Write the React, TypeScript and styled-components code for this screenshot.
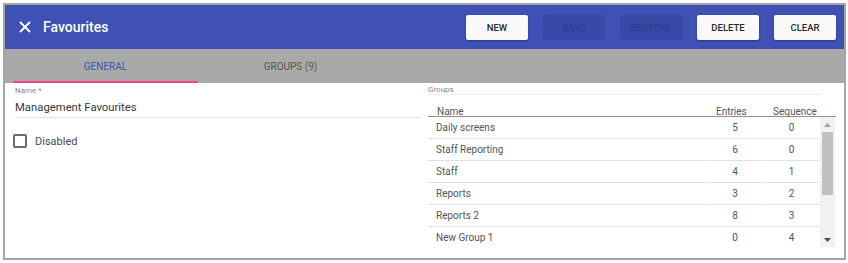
import React from "react";
import styled, { createGlobalStyle } from "styled-components";

const GlobalStyle = createGlobalStyle`
  html, body { margin: 0; padding: 0; background: #ffffff; }
  body { font-family: Roboto, "Liberation Sans", Arial, sans-serif; }
  * { box-sizing: border-box; }
`;

const Frame = styled.div`
  margin: 3px 0 0 3px;
  width: 843px;
  height: 257px;
  border: 2px solid #a4a4a4;
  display: flex;
  flex-direction: column;
  overflow: hidden;
`;

const Header = styled.div`
  height: 44px;
  flex: none;
  background: #3f51b5;
  display: flex;
  align-items: center;
  padding: 0 8px 0 14px;
`;

const CloseIcon = styled.svg`
  width: 12px;
  height: 12px;
  flex: none;
`;

const Title = styled.div`
  color: #ffffff;
  font-size: 14px;
  font-weight: 500;
  margin-left: 12px;
  flex: 1;
`;

const ButtonRow = styled.div`
  display: flex;
  gap: 15px;
`;

const ActionButton = styled.button<{ $disabled?: boolean }>`
  width: 62px;
  height: 25px;
  border: none;
  border-radius: 2px;
  font-family: Roboto, "Liberation Sans", Arial, sans-serif;
  font-size: 9.5px;
  font-weight: 500;
  text-transform: uppercase;
  padding: 0;
  background: ${(p) => (p.$disabled ? "#3848a6" : "#fafafa")};
  color: ${(p) => (p.$disabled ? "#2f3d8e" : "#2a2a2a")};
  box-shadow: ${(p) =>
    p.$disabled ? "none" : "0 1px 2px rgba(0,0,0,0.35)"};
`;

const TabBar = styled.div`
  height: 34px;
  flex: none;
  background: #a9a9a9;
  display: flex;
  padding-left: 8px;
`;

const Tab = styled.div<{ $active?: boolean }>`
  width: 185px;
  display: flex;
  align-items: center;
  justify-content: center;
  font-size: 10px;
  text-transform: uppercase;
  color: ${(p) => (p.$active ? "#3f51b5" : "#555555")};
  border-bottom: 2px solid ${(p) => (p.$active ? "#ff4081" : "transparent")};
  padding-top: 2px;
`;

const Content = styled.div`
  flex: 1;
  display: flex;
  gap: 8px;
  padding: 0 8px 0 10px;
  min-height: 0;
`;

const LeftColumn = styled.div`
  width: 405px;
  display: flex;
  flex-direction: column;
`;

const FieldLabel = styled.div`
  font-size: 8px;
  color: #8a8a8a;
  margin-top: 3px;
  height: 10px;
  line-height: 10px;
`;

const FieldValue = styled.div`
  font-size: 11.3px;
  color: #383838;
  height: 22px;
  padding-top: 2px;
  line-height: 19px;
  border-bottom: 1px solid #e2e2e2;
`;

const CheckRow = styled.label`
  display: flex;
  align-items: center;
  margin-top: 16px;
  margin-left: -2px;
  gap: 8px;
  font-size: 11px;
  color: #4a4a4a;
`;

const CheckBox = styled.span`
  width: 14px;
  height: 14px;
  border: 2px solid #6a6a6a;
  border-radius: 2px;
  flex: none;
`;

const RightColumn = styled.div`
  flex: 1;
  display: flex;
  flex-direction: column;
  min-height: 0;
`;

const GroupsLabel = styled.div`
  font-size: 8px;
  color: #8a8a8a;
  margin-top: 2px;
  height: 10px;
  line-height: 9px;
  width: 392px;
  border-bottom: 1px solid #ececec;
`;

const TableHead = styled.div`
  margin-top: 11px;
  display: grid;
  grid-template-columns: 279px 57px 56px 15px;
  border-bottom: 1px solid #8f8f8f;
  font-size: 10px;
  color: #555555;
  height: 11px;
  line-height: 11px;
`;

const HeadCell = styled.div`
  padding-left: 9px;
`;

const TableArea = styled.div`
  display: flex;
  height: 130px;
`;

const TableBody = styled.div`
  width: 392px;
  overflow: hidden;
`;

const Row = styled.div`
  display: grid;
  grid-template-columns: 279px 57px 56px;
  height: 22px;
`;

const Cell = styled.div<{ $center?: boolean }>`
  font-size: 10px;
  color: #555555;
  line-height: 21px;
  border-bottom: 1px solid #e0e0e0;
  padding-left: ${(p) => (p.$center ? "0" : "8px")};
  text-align: ${(p) => (p.$center ? "center" : "left")};
  margin-right: 1px;
`;

const ScrollBar = styled.div`
  width: 15px;
  height: 100%;
  background: #f1f1f1;
  display: flex;
  flex-direction: column;
`;

const ScrollButton = styled.div`
  height: 15px;
  flex: none;
  display: flex;
  align-items: center;
  justify-content: center;
`;

const Arrow = styled.svg`
  width: 7px;
  height: 4px;
`;

const ScrollTrack = styled.div`
  flex: 1;
  padding: 0 2px;
`;

const ScrollThumb = styled.div`
  height: 63px;
  background: #c1c1c1;
`;

const groups = [
  { name: "Daily screens", entries: 5, sequence: 0 },
  { name: "Staff Reporting", entries: 6, sequence: 0 },
  { name: "Staff", entries: 4, sequence: 1 },
  { name: "Reports", entries: 3, sequence: 2 },
  { name: "Reports 2", entries: 8, sequence: 3 },
  { name: "New Group 1", entries: 0, sequence: 4 },
];

export default function App() {
  return (
    <>
      <GlobalStyle />
      <Frame>
        <Header>
          <CloseIcon viewBox="0 0 12 12">
            <path
              d="M1 1 L11 11 M11 1 L1 11"
              stroke="#ffffff"
              strokeWidth="1.8"
              fill="none"
            />
          </CloseIcon>
          <Title>Favourites</Title>
          <ButtonRow>
            <ActionButton>New</ActionButton>
            <ActionButton $disabled>Save</ActionButton>
            <ActionButton $disabled>Restore</ActionButton>
            <ActionButton>Delete</ActionButton>
            <ActionButton>Clear</ActionButton>
          </ButtonRow>
        </Header>
        <TabBar>
          <Tab $active>General</Tab>
          <Tab>Groups (9)</Tab>
        </TabBar>
        <Content>
          <LeftColumn>
            <FieldLabel>Name *</FieldLabel>
            <FieldValue>Management Favourites</FieldValue>
            <CheckRow>
              <CheckBox />
              Disabled
            </CheckRow>
          </LeftColumn>
          <RightColumn>
            <GroupsLabel>Groups</GroupsLabel>
            <TableHead>
              <HeadCell>Name</HeadCell>
              <HeadCell>Entries</HeadCell>
              <HeadCell>Sequence</HeadCell>
              <div />
            </TableHead>
            <TableArea>
              <TableBody>
                {groups.map((g) => (
                  <Row key={g.name}>
                    <Cell>{g.name}</Cell>
                    <Cell $center>{g.entries}</Cell>
                    <Cell $center>{g.sequence}</Cell>
                  </Row>
                ))}
              </TableBody>
              <ScrollBar>
                <ScrollButton>
                  <Arrow viewBox="0 0 7 4">
                    <path d="M0 4 L3.5 0 L7 4 Z" fill="#a3a3a3" />
                  </Arrow>
                </ScrollButton>
                <ScrollTrack>
                  <ScrollThumb />
                </ScrollTrack>
                <ScrollButton>
                  <Arrow viewBox="0 0 7 4">
                    <path d="M0 0 L7 0 L3.5 4 Z" fill="#505050" />
                  </Arrow>
                </ScrollButton>
              </ScrollBar>
            </TableArea>
          </RightColumn>
        </Content>
      </Frame>
    </>
  );
}
